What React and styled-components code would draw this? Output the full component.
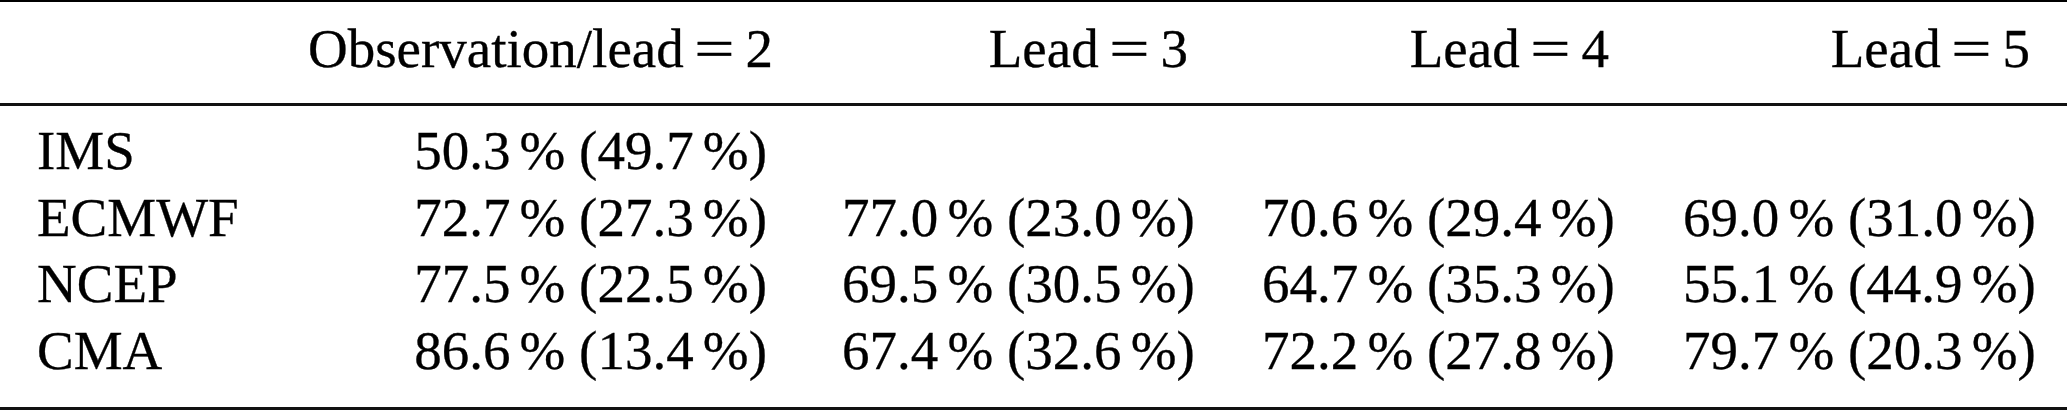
import React from 'react'
import styled, { createGlobalStyle } from 'styled-components'

const GlobalStyle = createGlobalStyle`
  html, body {
    margin: 0;
    padding: 0;
    background: #fff;
  }
  body {
    font-family: 'Liberation Serif', 'Times New Roman', serif;
    color: #000;
  }
`

const Table = styled.table`
  width: 2067px;
  table-layout: fixed;
  border-collapse: separate;
  border-spacing: 0;
  border-top: 2px solid #000;
  border-bottom: 3px solid #111;
  font-family: 'Liberation Serif', 'Times New Roman', serif;
  font-size: 55px;
  line-height: 66.7px;
  -webkit-text-stroke: 0.3px #000;
`
const Col = styled.col`
  width: ${props => props.width}px;
`
const HeadCell = styled.th`
  font-weight: normal;
  text-align: ${props => (props.left ? 'left' : 'right')};
  padding: 14px 37px 20.3px;
  border-bottom: 3px solid #111;
  white-space: nowrap;
`
const Row = styled.tr`
  &:first-child td {
    padding-top: 12px;
  }
  &:last-child td {
    padding-bottom: 22px;
  }
`
const Cell = styled.td`
  text-align: ${props => (props.left ? 'left' : 'right')};
  padding: 0 ${props => (props.left ? 37 : 38)}px 0 37px;
  white-space: nowrap;
`
const Eq = styled.span`
  display: inline-block;
  margin: 0 0.28em;
  transform: scaleX(1.3);
`
const Thin = styled.span`
  display: inline-block;
  width: 0.167em;
`

const widths = [271, 534, 420, 421, 421]

const heads = ['Observation/lead', 'Lead', 'Lead', 'Lead']

const rows = [
  { name: 'IMS', values: [['50.3', '49.7']] },
  { name: 'ECMWF', values: [['72.7', '27.3'], ['77.0', '23.0'], ['70.6', '29.4'], ['69.0', '31.0']] },
  { name: 'NCEP', values: [['77.5', '22.5'], ['69.5', '30.5'], ['64.7', '35.3'], ['55.1', '44.9']] },
  { name: 'CMA', values: [['86.6', '13.4'], ['67.4', '32.6'], ['72.2', '27.8'], ['79.7', '20.3']] }
]

const Share = ({ value }) => {
  if (!value) return null
  const [hit, miss] = value
  return (
    <>
      {hit}<Thin />% ({miss}<Thin />%)
    </>
  )
}

const App = () => {
  return (
    <>
      <GlobalStyle />
      <Table>
        <colgroup>
          {widths.map((w, i) => <Col key={i} width={w} />)}
        </colgroup>
        <thead>
          <tr>
            <HeadCell left />
            {heads.map((label, i) => (
              <HeadCell key={i}>
                {label}<Eq>=</Eq>{i + 2}
              </HeadCell>
            ))}
          </tr>
        </thead>
        <tbody>
          {rows.map(row => (
            <Row key={row.name}>
              <Cell left>{row.name}</Cell>
              {[0, 1, 2, 3].map(i => (
                <Cell key={i}><Share value={row.values[i]} /></Cell>
              ))}
            </Row>
          ))}
        </tbody>
      </Table>
    </>
  )
}

export default App
